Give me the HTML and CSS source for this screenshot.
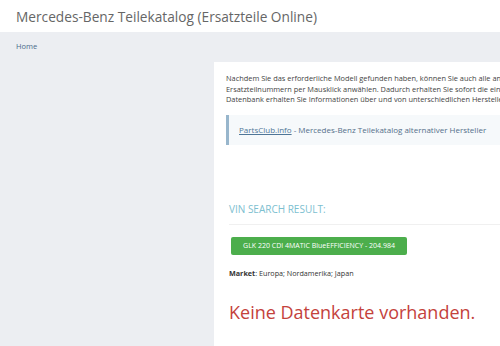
FILE: index.html
```html
<!DOCTYPE html>
<html lang="de">

<head>
    <meta charset="UTF-8">
    <meta name="viewport" content="width=device-width, initial-scale=1.0">
    <title>Mercedes-Benz Teilekatalog</title>
    <link rel="stylesheet" href="styles.css">
</head>

<body>
    <header class="site-header">
        <h1>Mercedes-Benz Teilekatalog (Ersatzteile Online)</h1>
    </header>

    <div class="page">
        <nav class="breadcrumb">
            <a href="#">Home</a>
        </nav>

        <div class="layout">
            <aside class="sidebar"></aside>

            <main class="content">
                <p class="intro">
                    Nachdem Sie das erforderliche Modell gefunden haben, können Sie auch alle angezeigten<br>
                    Ersatzteilnummern per Mausklick anwählen. Dadurch erhalten Sie sofort die einzelnen<br>
                    Datenbank erhalten Sie Informationen über und von unterschiedlichen Herstellern.
                </p>

                <blockquote class="note">
                    <span><a href="#">PartsClub.info</a> - Mercedes-Benz Teilekatalog alternativer Hersteller</span>
                </blockquote>

                <h3 class="result-title">VIN SEARCH RESULT:</h3>

                <a href="#" class="model-btn">GLK 220 CDI 4MATIC BlueEFFICIENCY - 204.984</a>

                <p class="market"><b>Market</b>: Europa; Nordamerika; Japan</p>

                <h2 class="no-data">Keine Datenkarte vorhanden.</h2>
            </main>
        </div>
    </div>
</body>

</html>
```

FILE: styles.css
```css
html,
body {
    margin: 0;
    height: 100%;
    overflow: hidden;
}

body {
    font-family: "Open Sans", "Liberation Sans", sans-serif;
    background-color: #eceef2;
    color: #333;
}

.site-header {
    background-color: #fff;
    height: 32px;
    padding: 0 16px;
    display: flex;
    align-items: center;
}

.site-header h1 {
    margin: 0;
    font-size: 13.7px;
    font-weight: normal;
    color: #666;
    white-space: nowrap;
}

.breadcrumb {
    padding: 9px 16px 0;
    height: 21px;
    font-size: 7.5px;
}

.breadcrumb a {
    color: #4a6c8c;
    text-decoration: none;
}

.layout {
    display: flex;
}

.sidebar {
    width: 214px;
    flex-shrink: 0;
}

.content {
    background-color: #fff;
    min-height: 300px;
    width: 420px;
    flex-shrink: 0;
    padding: 11px 12px 0;
}

.intro {
    margin: 0 0 10px;
    font-size: 7.4px;
    line-height: 10.5px;
    white-space: nowrap;
    color: #444;
}

.note {
    margin: 0;
    padding: 0 10px;
    height: 30px;
    display: flex;
    align-items: center;
    border-left: 3px solid #98b6cc;
    background-color: #f6f9fb;
    font-size: 8px;
    color: #55708a;
    white-space: nowrap;
}

.note a {
    color: #4f7697;
}

.result-title {
    margin: 57px 0 0 3px;
    font-size: 10px;
    font-weight: normal;
    color: #7cc0d0;
    padding-bottom: 8px;
    border-bottom: 1px solid #f0f0f0;
}

.model-btn {
    display: inline-block;
    margin: 12px 0 0 5px;
    width: 176px;
    height: 18px;
    line-height: 18px;
    text-align: center;
    background-color: #4cae4c;
    border-radius: 2px;
    color: #fff;
    font-size: 7px;
    text-decoration: none;
}

.market {
    margin: 13px 0 0 3px;
    font-size: 7.2px;
}

.no-data {
    margin: 22px 0 0 3px;
    font-size: 18px;
    font-weight: normal;
    color: #c4423c;
}
```
